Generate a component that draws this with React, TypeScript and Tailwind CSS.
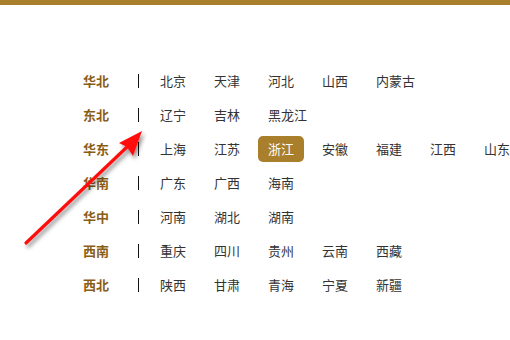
const regions = [
  { name: "华北", cities: ["北京", "天津", "河北", "山西", "内蒙古"] },
  { name: "东北", cities: ["辽宁", "吉林", "黑龙江"] },
  { name: "华东", cities: ["上海", "江苏", "浙江", "安徽", "福建", "江西", "山东"] },
  { name: "华南", cities: ["广东", "广西", "海南"] },
  { name: "华中", cities: ["河南", "湖北", "湖南"] },
  { name: "西南", cities: ["重庆", "四川", "贵州", "云南", "西藏"] },
  { name: "西北", cities: ["陕西", "甘肃", "青海", "宁夏", "新疆"] },
]

function Arrow() {
  return (
    <svg className="absolute left-0 top-0 pointer-events-none" width="510" height="340">
      <defs>
        <filter id="sh" x="-20%" y="-20%" width="140%" height="140%">
          <feDropShadow dx="2" dy="3" stdDeviation="2" floodColor="#000" floodOpacity="0.45" />
        </filter>
      </defs>
      <g filter="url(#sh)">
        <line x1="26" y1="243" x2="127" y2="147" stroke="#ff1010" strokeWidth="3.2" strokeLinecap="round" />
        <polygon points="142,131 133,156 127,147 119,143" fill="#ff1010" />
      </g>
    </svg>
  )
}

export default function App() {
  return (
    <div className="relative w-[510px] h-[340px] bg-white overflow-hidden" style={{ fontFamily: '"Noto Sans CJK SC", "Noto Sans", sans-serif' }}>
      <div className="h-[5px] bg-[#a97f2c]" />
      <div className="mt-[59px] pl-[83px] flex flex-col">
        {regions.map((r) => (
          <div key={r.name} className="h-[34px] flex items-center">
            <div className="w-[55px] shrink-0 text-[13px] font-bold text-[#8a5d16]">{r.name}</div>
            <div className="w-px shrink-0 h-[14px] bg-[#111]" />
            <div className="ml-[11px] shrink-0 flex items-center gap-[8px] whitespace-nowrap">
              {r.cities.map((c) =>
                c === "浙江" ? (
                  <span key={c} className="px-[10px] h-[26px] leading-[26px] rounded-[5px] bg-[#a97f2c] text-white text-[13px]">
                    {c}
                  </span>
                ) : (
                  <span key={c} className="px-[10px] h-[26px] leading-[26px] text-[13px] text-[#333]">
                    {c}
                  </span>
                )
              )}
            </div>
          </div>
        ))}
      </div>
      <Arrow />
    </div>
  )
}
